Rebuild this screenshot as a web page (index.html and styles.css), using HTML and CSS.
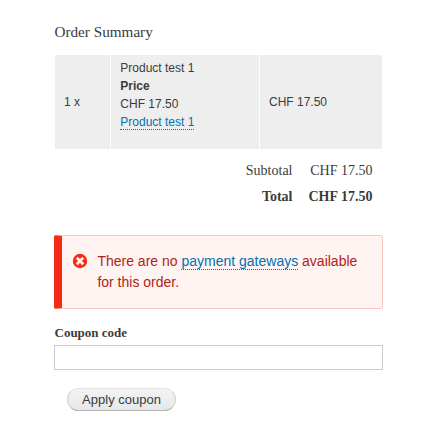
FILE: index.html
```html
<!DOCTYPE html>
<html lang="en">
<head>
<meta charset="utf-8">
<title>Order Summary</title>
<link rel="stylesheet" href="styles.css">
</head>
<body>
<main class="checkout">
  <h3 class="title">Order Summary</h3>
  <div class="items">
    <div class="cell">1 x</div>
    <div class="cell">
      <div>Product test 1</div>
      <div class="label">Price</div>
      <div>CHF 17.50</div>
      <div><a class="link" href="#">Product test 1</a></div>
    </div>
    <div class="cell">CHF 17.50</div>
  </div>
  <div class="totals">
    <div class="line"><span>Subtotal</span><span class="amount">CHF 17.50</span></div>
    <div class="line total"><span>Total</span><span class="amount">CHF 17.50</span></div>
  </div>
  <div class="message">
    <svg class="icon" width="16" height="16" viewBox="0 0 16 16">
      <circle cx="8" cy="8" r="7.2" fill="#f52b16"/>
      <path d="M4.8 4.8l6.4 6.4M11.2 4.8l-6.4 6.4" stroke="#fff4f1" stroke-width="2.7"/>
    </svg>
    <p class="text">There are no <a class="link" href="#">payment gateways</a> available for this order.</p>
  </div>
  <label class="coupon-label" for="coupon">Coupon code</label>
  <input class="coupon" id="coupon" type="text">
  <button class="apply" type="button">Apply coupon</button>
</main>
</body>
</html>
```
FILE: styles.css
```css
* { box-sizing: border-box; }
body {
  margin: 0;
  background: #fff;
  color: #3b3b3b;
  font-family: "Liberation Serif", Georgia, serif;
}
.checkout {
  display: flex;
  flex-direction: column;
  width: 329px;
  margin: 22px 0 0 54px;
}
.title {
  margin: 0 0 13px;
  padding-left: 0.5px;
  font-size: 15.2px;
  font-weight: normal;
  line-height: 20px;
}
.items {
  display: grid;
  grid-template-columns: 55px 148px 122px;
  gap: 1px;
  height: 94px;
  margin-left: 1px;
  font: 12px/18px "Liberation Sans", Arial, sans-serif;
}
.cell {
  display: flex;
  flex-direction: column;
  justify-content: center;
  padding: 0 9px;
  background: #eee;
}
.cell:nth-child(2) { justify-content: flex-start; padding-top: 4px; padding-left: 9.3px; }
.label { font-weight: bold; }
.link {
  color: #0071b3;
  text-decoration: none;
  border-bottom: 1px dotted #0071b3;
}
.totals {
  padding: 9px 10.5px 0 0;
  font-size: 14px;
  line-height: 26px;
}
.line { display: flex; justify-content: flex-end; }
.amount { width: 80px; text-align: right; }
.total { font-weight: bold; }
.message {
  display: flex;
  height: 74px;
  margin-top: 25px;
  padding: 15px 20px 0 10px;
  border: 1px solid #f9c9bf;
  border-left: 8px solid #f52b16;
  border-radius: 2px;
  background: #fff4f1;
  color: #b02318;
  font: 14px/21px "Liberation Sans", Arial, sans-serif;
}
.icon { flex: none; margin: 2px 9.4px 0 0; }
.text { margin: 0; }
.coupon-label {
  margin: 15px 0 3px 0.5px;
  font-size: 13px;
  font-weight: bold;
  line-height: 18px;
}
.coupon {
  height: 25px;
  padding: 2px 4px;
  border: 1px solid #ccc;
  background: #fff;
}
.apply {
  width: 109px;
  height: 23px;
  margin: 18px 0 0 13px;
  padding: 0;
  border: 1px solid #e4e4e4;
  border-bottom-color: #b4b4b4;
  border-left-color: #d2d2d2;
  border-right-color: #d2d2d2;
  border-radius: 12px;
  background: linear-gradient(#f3f3f3, #e8e8e8);
  color: #3a3a3a;
  font: 13px/17px "Liberation Sans", Arial, sans-serif;
}
```
